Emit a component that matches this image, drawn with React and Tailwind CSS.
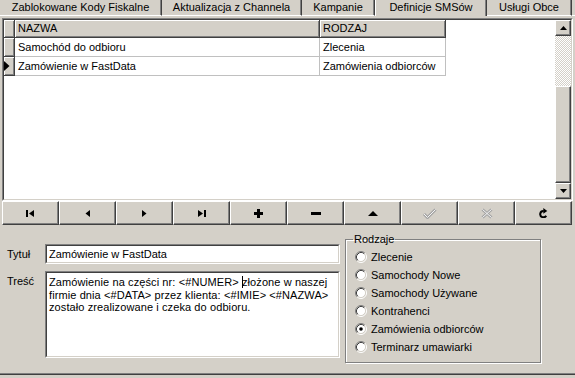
import React from "react";

const raised =
  "border border-t-white border-l-white border-b-[#404040] border-r-[#404040] shadow-[inset_-1px_-1px_0_#808080]";
const sunken =
  "border border-t-[#808080] border-l-[#808080] border-b-white border-r-white";
const sunkenInner =
  "border border-t-[#404040] border-l-[#404040] border-b-[#d4d0c8] border-r-[#d4d0c8]";

const Tab = ({ w, children }) => (
  <div
    className={`${w} h-[16px] flex items-center justify-center border-b border-white border-r border-r-[#404040] shadow-[inset_-1px_0_0_#808080] whitespace-nowrap`}
  >
    {children}
  </div>
);

const HeadCell = ({ w, children }) => (
  <div
    className={`${w} h-full flex items-center pl-[3px] bg-[#d4d0c8] border-r border-b border-[#404040] shadow-[inset_1px_1px_0_#fff,inset_-1px_-1px_0_#808080] whitespace-nowrap`}
  >
    {children}
  </div>
);

const Cell = ({ w, children }) => (
  <div
    className={`${w} h-full flex items-center pl-[3px] pt-[1px] border-r border-b border-[#c0c0c0] whitespace-nowrap`}
  >
    {children}
  </div>
);

const Indicator = ({ current }) => (
  <div className="w-[11px] h-full flex items-center bg-[#d4d0c8] border-r border-b border-[#404040] shadow-[inset_1px_1px_0_#fff,inset_-1px_-1px_0_#808080]">
    {current && (
      <svg width="6" height="10" viewBox="0 0 6 10">
        <polygon points="0,0 5.5,5 0,10" fill="#000" />
      </svg>
    )}
  </div>
);

const Arrow = ({ down }) => (
  <svg width="7" height="4" viewBox="0 0 7 4">
    <polygon points={down ? "0,0 7,0 3.5,4" : "3.5,0 7,4 0,4"} fill="#000" />
  </svg>
);

const icons = [
  <svg key="first" width="9" height="7" viewBox="0 0 9 7">
    <rect x="0" y="0" width="2" height="7" fill="#000" />
    <polygon points="8,0 8,7 3,3.5" fill="#000" />
  </svg>,
  <svg key="prev" width="5" height="7" viewBox="0 0 5 7">
    <polygon points="5,0 5,7 0.5,3.5" fill="#000" />
  </svg>,
  <svg key="next" width="5" height="7" viewBox="0 0 5 7">
    <polygon points="0,0 0,7 4.5,3.5" fill="#000" />
  </svg>,
  <svg key="last" width="9" height="7" viewBox="0 0 9 7">
    <polygon points="1,0 1,7 6,3.5" fill="#000" />
    <rect x="7" y="0" width="2" height="7" fill="#000" />
  </svg>,
  <svg key="plus" width="9" height="9" viewBox="0 0 9 9">
    <rect x="3" y="0" width="3" height="9" fill="#000" />
    <rect x="0" y="3" width="9" height="3" fill="#000" />
  </svg>,
  <svg key="minus" width="10" height="3" viewBox="0 0 10 3">
    <rect x="0" y="0" width="10" height="3" fill="#000" />
  </svg>,
  <svg key="up" width="10" height="5" viewBox="0 0 10 5">
    <polygon points="5,0 10,5 0,5" fill="#000" />
  </svg>,
  <svg key="post" width="15" height="11" viewBox="0 0 15 11">
    <polyline points="2,6 5.5,9.5 13.5,1.5" fill="none" stroke="#a4a4a4" strokeWidth="3" />
    <polyline points="2,6 5.5,9.5 13.5,1.5" fill="none" stroke="#f4f4f4" strokeWidth="1" />
  </svg>,
  <svg key="cancel" width="12" height="11" viewBox="0 0 12 11">
    <path d="M1.5 1.5 L10.5 9.5 M10.5 1.5 L1.5 9.5" fill="none" stroke="#a4a4a4" strokeWidth="3" />
    <path d="M1.5 1.5 L10.5 9.5 M10.5 1.5 L1.5 9.5" fill="none" stroke="#f4f4f4" strokeWidth="1" />
  </svg>,
  <svg key="refresh" width="9" height="10" viewBox="0 -0.5 9 10">
    <path d="M7.2 7.2 A3.2 3.2 0 1 1 4.6 2.4" fill="none" stroke="#000" strokeWidth="2" />
    <polygon points="4.3,-0.5 8.3,2.4 4.3,5.3" fill="#000" />
  </svg>,
];

const Radio = ({ checked }) => (
  <svg width="12" height="12" viewBox="0 0 12 12">
    <circle cx="6" cy="6" r="4.5" fill="#fff" />
    <path d="M2.11 9.89 A5.5 5.5 0 0 1 9.89 2.11" fill="none" stroke="#808080" />
    <path d="M9.89 2.11 A5.5 5.5 0 0 1 2.11 9.89" fill="none" stroke="#fff" />
    <path d="M2.82 9.18 A4.5 4.5 0 0 1 9.18 2.82" fill="none" stroke="#404040" />
    <path d="M9.18 2.82 A4.5 4.5 0 0 1 2.82 9.18" fill="none" stroke="#d4d0c8" />
    {checked && <circle cx="6" cy="6" r="1.8" fill="#000" />}
  </svg>
);

const rodzaje = [
  "Zlecenie",
  "Samochody Nowe",
  "Samochody Używane",
  "Kontrahenci",
  "Zamówienia odbiorców",
  "Terminarz umawiarki",
];

export default function App() {
  return (
    <div className="w-[575px] h-[378px] overflow-hidden flex flex-col bg-[#d4d0c8] text-black text-[11px] leading-[13px] font-['Liberation_Sans',Arial,sans-serif]">
      {/* Tabs */}
      <div className="flex h-[16px] shrink-0">
        <Tab w="w-[162px]">Zablokowane Kody Fiskalne</Tab>
        <Tab w="w-[140px]">Aktualizacja z Channela</Tab>
        <Tab w="w-[73px]">Kampanie</Tab>
        <div className="w-[112px] h-[16px] flex items-center justify-center pb-[2px] border-l border-white border-r border-r-[#404040] shadow-[inset_-1px_0_0_#808080] whitespace-nowrap">
          Definicje SMSów
        </div>
        <Tab w="w-[85px]">Usługi Obce</Tab>
        <div className="flex-1 border-b border-white" />
      </div>

      {/* Grid */}
      <div className={`mx-[2px] mt-[2px] h-[183px] shrink-0 ${sunken}`}>
        <div className={`h-full flex bg-white ${sunkenInner}`}>
          <div className="w-[551px] flex flex-col">
            <div className="h-[18px] flex">
              <div className="w-[11px] h-full bg-[#d4d0c8] border-r border-b border-[#404040] shadow-[inset_1px_1px_0_#fff,inset_-1px_-1px_0_#808080]" />
              <HeadCell w="w-[305px]">NAZWA</HeadCell>
              <HeadCell w="w-[126px]">RODZAJ</HeadCell>
            </div>
            <div className="h-[19px] flex">
              <Indicator />
              <Cell w="w-[305px]">Samochód do odbioru</Cell>
              <Cell w="w-[126px]">Zlecenia</Cell>
            </div>
            <div className="h-[19px] flex">
              <Indicator current />
              <Cell w="w-[305px]">Zamówienie w FastData</Cell>
              <Cell w="w-[126px]">Zamówienia odbiorców</Cell>
            </div>
          </div>
          {/* Scrollbar */}
          <div className="w-[16px] flex flex-col">
            <div className={`h-[16px] flex items-center justify-center bg-[#d4d0c8] ${raised}`}>
              <Arrow />
            </div>
            <div className="h-[50px] bg-[image:repeating-conic-gradient(#ffffff_0_25%,#d4d0c8_0_50%)] bg-[length:2px_2px]" />
            <div className={`h-[97px] bg-[#d4d0c8] ${raised}`} />
            <div className={`h-[16px] flex items-center justify-center bg-[#d4d0c8] ${raised}`}>
              <Arrow down />
            </div>
          </div>
        </div>
      </div>

      {/* Navigator */}
      <div className="ml-[2px] w-[570px] h-[24px] shrink-0 grid grid-cols-10">
        {icons.map((icon, i) => (
          <div key={i} className={`flex items-center justify-center bg-[#d4d0c8] ${raised}`}>
            {icon}
          </div>
        ))}
      </div>

      {/* Edit area */}
      <div className="flex-1 flex pl-[7px]">
        <div className="flex flex-col">
          <div className="mt-[19px] h-[20px] flex items-center">
            <div className="w-[38px]">Tytuł</div>
            <div className={`w-[295px] h-[20px] ${sunken}`}>
              <div className={`h-full flex items-center pl-[2px] bg-white whitespace-nowrap ${sunkenInner}`}>
                Zamówienie w FastData
              </div>
            </div>
          </div>
          <div className="mt-[7px] flex">
            <div className="w-[38px] pt-[4px]">Treść</div>
            <div className={`w-[295px] h-[87px] ${sunken}`}>
              <div className={`h-full pl-[2px] pt-[3px] leading-[12.5px] bg-white whitespace-nowrap tracking-[0.1px] ${sunkenInner}`}>
                Zamówienie na części nr: &lt;#NUMER&gt;{" "}
                <span className="inline-block w-px h-[12px] -mr-px bg-black align-[-2px]" />
                złożone w naszej
                <br />
                firmie dnia &lt;#DATA&gt; przez klienta: &lt;#IMIE&gt; &lt;#NAZWA&gt;
                <br />
                zostało zrealizowane i czeka do odbioru.
              </div>
            </div>
          </div>
        </div>

        <fieldset className="ml-[5px] mt-[8px] w-[196px] h-[130px] border border-[#808080] shadow-[inset_1px_1px_0_#fff,1px_1px_0_#fff] pl-[9px] pt-[2px]">
          <legend className="ml-[-2px] px-[1px] leading-[13px]">Rodzaje</legend>
          {rodzaje.map((r) => (
            <div key={r} className="h-[18px] flex items-center gap-[4px] whitespace-nowrap">
              <Radio checked={r === "Zamówienia odbiorców"} />
              <span>{r}</span>
            </div>
          ))}
        </fieldset>
      </div>

      {/* Bottom edge */}
      <div className="h-[2px] shrink-0 border-t border-[#808080] bg-[#404040]" />
      <div className="h-[3px] shrink-0" />
    </div>
  );
}
